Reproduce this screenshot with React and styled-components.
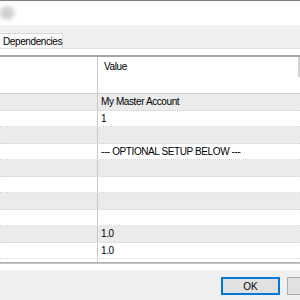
import React from 'react';
import styled, { createGlobalStyle } from 'styled-components';

const GlobalStyle = createGlobalStyle`
    html, body {
        margin: 0;
        padding: 0;
        background: #ffffff;
    }
    body {
        font-family: "Liberation Sans", Arial, sans-serif;
        font-size: 10px;
        letter-spacing: -0.4px;
        color: #000;
    }
`;

const rows = [
    { value: 'My Master Account' },
    { value: '1' },
    { value: '' },
    { value: '--- OPTIONAL SETUP BELOW ---' },
    { value: '' },
    { value: '' },
    { value: '' },
    { value: '' },
    { value: '1.0' },
    { value: '1.0' },
];

const Window = styled.div`
    width: 300px;
    height: 300px;
    display: flex;
    flex-direction: column;
    overflow: hidden;
    border-top: 1px solid #7c7c7c;
    box-sizing: border-box;
`;

const TitleArea = styled.div`
    height: 24px;
    background: #ffffff;
    display: flex;
    align-items: center;
`;

const BlurIcon = styled.div`
    width: 20px;
    height: 16px;
    margin-left: -3px;
    border-radius: 50%;
    background: radial-gradient(circle, #c9c9c9 0%, #dadada 45%, rgba(255,255,255,0) 75%);
    filter: blur(1.5px);
`;

const TabStrip = styled.div`
    height: 23px;
    background: #f0f0f0;
    display: flex;
    align-items: flex-end;
`;

const Tab = styled.div`
    height: 14px;
    width: 56px;
    padding: 0 3px;
    background: #fbfbfb;
    border: 1px solid #d9d9d9;
    border-bottom: none;
    border-left: none;
    display: flex;
    align-items: center;
    white-space: nowrap;
`;

const TabPanel = styled.div`
    flex: 1;
    display: flex;
    flex-direction: column;
    background: #ffffff;
    border-top: 1px solid #e3e3e3;
    padding-top: 6px;
`;

const Grid = styled.div`
    border-top: 2px solid #a6a6a6;
    border-bottom: 1px solid #c3c3c3;
    display: flex;
    flex-direction: column;
`;

const HeaderRow = styled.div`
    height: 36px;
    display: grid;
    grid-template-columns: 97px 1fr 2px;
    border-bottom: 1px solid #d0d0d0;
`;

const HeaderCell = styled.div`
    padding: 4px 0 0 6px;
    border-left: ${({ $divider }) => ($divider ? '1px solid #c8c8c8' : 'none')};
`;

const HeaderEdge = styled.div`
    height: 20px;
    background: #d3d3d3;
`;

const Row = styled.div`
    height: 16.5px;
    box-sizing: border-box;
    display: grid;
    grid-template-columns: 97px 1fr;
    background: ${({ $shade }) => ($shade ? '#ebebeb' : '#ffffff')};
    border-bottom: 1px dotted #d4d4d4;
`;

const Cell = styled.div`
    border-left: ${({ $divider }) => ($divider ? '1px solid #c8c8c8' : 'none')};
    padding-left: 3px;
    line-height: 15px;
    white-space: nowrap;
    overflow: hidden;
`;

const GridBottom = styled.div`
    height: 3px;
    border-bottom: 1px solid #b4b4b4;
    display: grid;
    grid-template-columns: 97px 1fr;
`;

const Gap = styled.div`
    height: 6px;
    background: #ffffff;
`;

const Footer = styled.div`
    flex: 1;
    background: #f0f0f0;
    display: flex;
    align-items: flex-start;
    gap: 7px;
    padding: 7px 0 0 221px;
    overflow: hidden;
`;

const Button = styled.button`
    width: 59px;
    height: 18px;
    box-sizing: border-box;
    font-family: "Liberation Sans", Arial, sans-serif;
    font-size: 10px;
    color: #000;
    background: #e1e1e1;
    border: ${({ $primary }) => ($primary ? '2px solid #0078d7' : '1px solid #adadad')};
    padding: 0;
    flex-shrink: 0;
`;

export default function App() {
    return (
        <>
            <GlobalStyle />
            <Window>
                <TitleArea>
                    <BlurIcon />
                </TitleArea>
                <TabStrip>
                    <Tab>Dependencies</Tab>
                </TabStrip>
                <TabPanel>
                    <Grid>
                        <HeaderRow>
                            <HeaderCell />
                            <HeaderCell $divider>Value</HeaderCell>
                            <HeaderEdge />
                        </HeaderRow>
                        {rows.map((row, index) => (
                            <Row $shade={index % 2 === 0} key={index}>
                                <Cell />
                                <Cell $divider>{row.value}</Cell>
                            </Row>
                        ))}
                        <GridBottom>
                            <div />
                            <Cell $divider />
                        </GridBottom>
                    </Grid>
                    <Gap />
                    <Footer>
                        <Button $primary>OK</Button>
                        <Button aria-label="Cancel" />
                    </Footer>
                </TabPanel>
            </Window>
        </>
    );
}
